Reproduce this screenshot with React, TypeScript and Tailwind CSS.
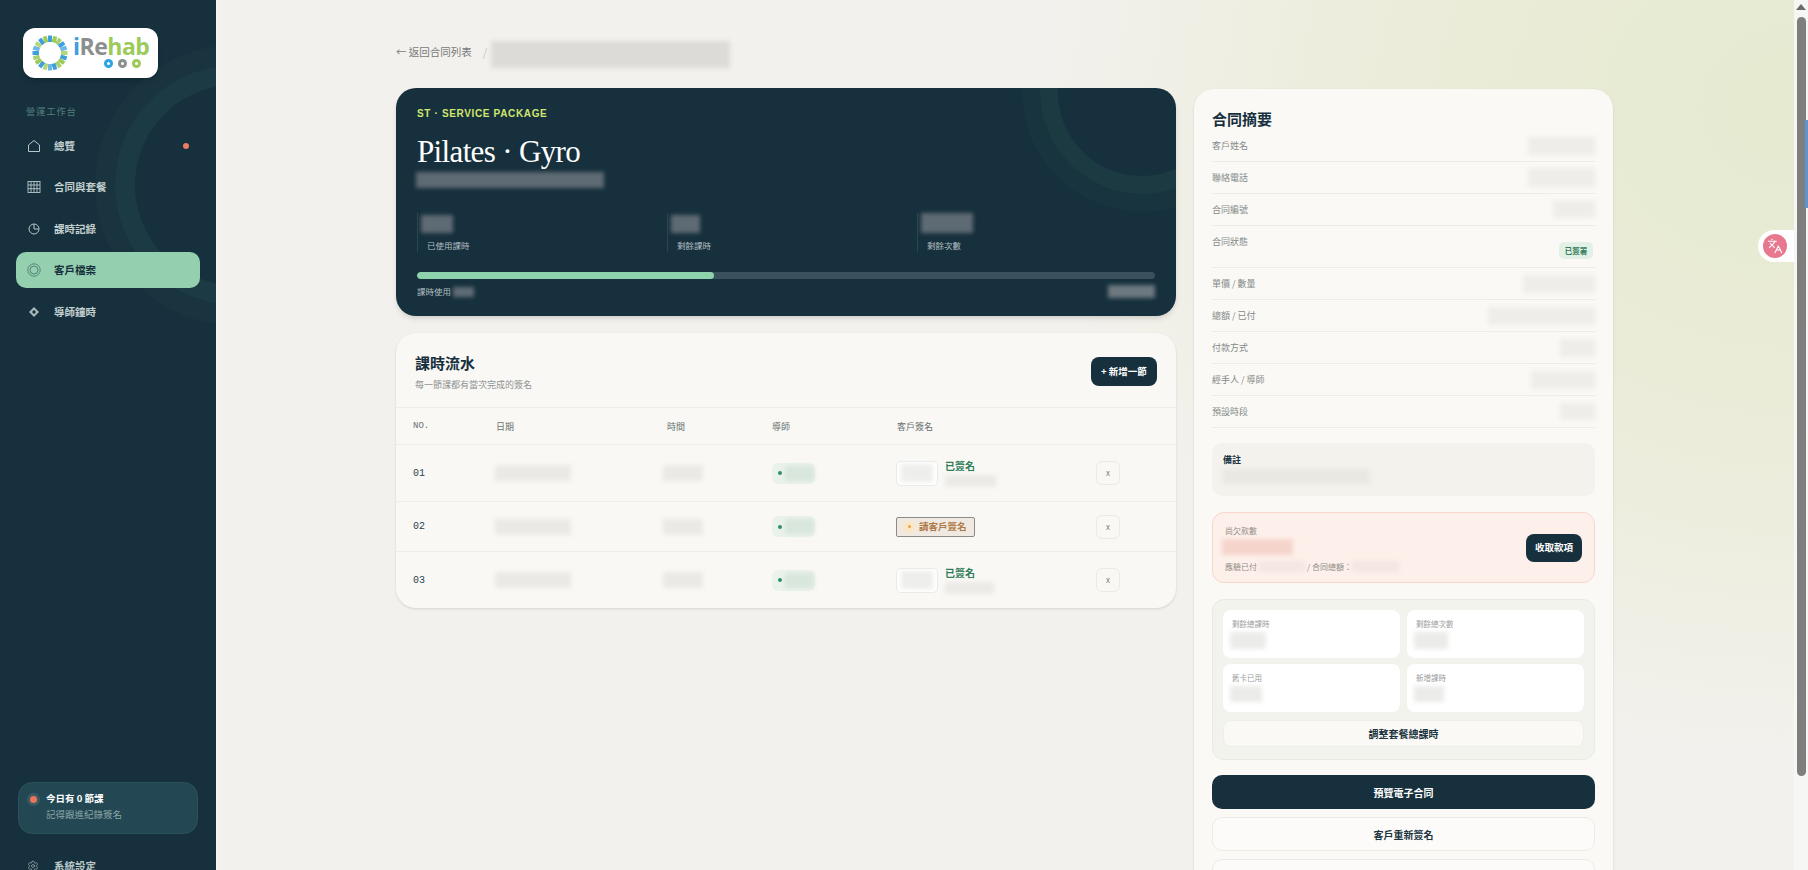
import { Languages, Settings } from 'lucide-react'

const cjk = { fontFamily: '"Noto Sans CJK TC", "Noto Sans", sans-serif' }

const summaryRows = [
  { label: '客戶姓名', blur: 'w-[67px] h-[18px]' },
  { label: '聯絡電話', blur: 'w-[67px] h-[19px]' },
  { label: '合同編號', blur: 'w-[42px] h-[17px]' },
]

const summaryRowsAfter = [
  { label: '單價 / 數量', blur: 'w-[72px] h-[18px]' },
  { label: '總額 / 已付', blur: 'w-[107px] h-[18px]' },
  { label: '付款方式', blur: 'w-[35px] h-[18px]' },
  { label: '經手人 / 導師', blur: 'w-[64px] h-[18px]' },
  { label: '預設時段', blur: 'w-[35px] h-[17px]' },
]

// blurred-out values in the screenshot
function Redact({ className }: { className: string }) {
  return <div className={`shrink-0 blur-[2px] ${className}`} />
}

function LogoRing() {
  const colors = ['#3f9fdc', '#9ccb5c', '#a9d16e', '#3f9fdc', '#6db8e6', '#b4d77a']
  return (
    <svg width="36" height="36" viewBox="0 0 36 36" className="shrink-0">
      {Array.from({ length: 20 }).map((_, i) => (
        <rect
          key={i}
          x="16"
          y="0.5"
          width="4"
          height="6.5"
          rx="0.5"
          fill={colors[i % colors.length]}
          transform={`rotate(${i * 18} 18 18)`}
        />
      ))}
    </svg>
  )
}

function LogoDot({ color }: { color: string }) {
  return (
    <span className="w-[9px] h-[9px] rounded-full flex items-center justify-center" style={{ background: color }}>
      <span className="w-[3px] h-[3px] rounded-full bg-white" />
    </span>
  )
}

function NavIcon({ name }: { name: string }) {
  if (name === 'home') {
    return (
      <svg width="14" height="14" viewBox="0 0 14 14" fill="none" stroke="#b9c7c8" strokeWidth="1">
        <path d="M1.5 6 7 1.5 12.5 6v6.5h-11z" />
      </svg>
    )
  }
  if (name === 'grid') {
    return (
      <svg width="14" height="14" viewBox="0 0 14 14" fill="none" stroke="#b9c7c8" strokeWidth="0.9">
        <rect x="1" y="1.5" width="12" height="11" />
        <path d="M4 1.5v11M7 1.5v11M10 1.5v11M1 5h12M1 8.7h12" />
      </svg>
    )
  }
  if (name === 'clock') {
    return (
      <svg width="14" height="14" viewBox="0 0 14 14" fill="none" stroke="#b9c7c8" strokeWidth="1">
        <circle cx="7" cy="7" r="5" />
        <path d="M7 2.2V7h4.6" />
      </svg>
    )
  }
  if (name === 'target') {
    return (
      <svg width="14" height="14" viewBox="0 0 14 14" fill="none" stroke="#4f7d70" strokeWidth="0.9">
        <circle cx="7" cy="7" r="6.2" />
        <circle cx="7" cy="7" r="4" />
      </svg>
    )
  }
  return (
    <svg width="14" height="14" viewBox="0 0 14 14">
      <path d="M7 2 12 7 7 12 2 7z" fill="#a9b9ba" />
      <circle cx="7" cy="7" r="1.7" fill="#16303d" />
    </svg>
  )
}

function NavItem({ icon, label, active, dot, className }: { icon: string; label: string; active?: boolean; dot?: boolean; className: string }) {
  return (
    <div
      className={`flex items-center pl-[11px] pr-[11px] h-[36px] rounded-[10px] ${active ? 'bg-[#94cfb0] text-[#17323d]' : 'text-[#c3cfcf]'} ${className}`}
    >
      <span className="w-[27px] shrink-0 flex"><NavIcon name={icon} /></span>
      <span className="text-[10.5px] font-bold">{label}</span>
      {dot && <span className="ml-auto w-[6px] h-[6px] rounded-full bg-[#e97c62]" />}
    </div>
  )
}

function Sidebar() {
  return (
    <aside className="relative w-[217px] h-full shrink-0 overflow-hidden bg-[#16303d] border-r border-[#f8f6f3]">
      <div className="absolute left-[95px] top-[45px] w-[280px] h-[280px] rounded-full border-[20px] border-[#19343f]" />
      <div className="absolute left-[115px] top-[65px] w-[240px] h-[240px] rounded-full border-[20px] border-[#1c3a44]" />

      <div className="relative flex flex-col h-full">
        <div className="ml-[23px] mt-[28px] w-[135px] h-[50px] rounded-[12px] bg-white flex items-center pl-[9px] gap-[5px] shadow-md">
          <LogoRing />
          <div className="flex flex-col leading-none">
            <div className="text-[23px] font-bold leading-[24px] tracking-[-0.5px] mt-[-5px]" style={{ fontFamily: '"Open Sans", sans-serif' }}>
              <span className="text-[#3f9fdc]">i</span>
              <span className="text-[#8c8f90]">Re</span>
              <span className="text-[#9ccb5c]">hab</span>
            </div>
            <div className="flex gap-[5px] pl-[31px] mt-[1px]">
              <LogoDot color="#2ea4e4" />
              <LogoDot color="#8c8f90" />
              <LogoDot color="#9ccb5c" />
            </div>
          </div>
        </div>

        <div className="ml-[26px] mt-[28px] text-[9px] tracking-[1.2px] text-[#557f7c] leading-[12px]">營運工作台</div>

        <div className="flex flex-col mx-[16px] mt-[10px]">
          <NavItem icon="home" label="總覽" dot className="mb-[5px]" />
          <NavItem icon="grid" label="合同與套餐" className="mb-[6px]" />
          <NavItem icon="clock" label="課時記錄" className="mb-[5px]" />
          <NavItem icon="target" label="客戶檔案" active className="mb-[6px]" />
          <NavItem icon="diamond" label="導師鐘時" />
        </div>

        <div className="mt-auto">
          <div className="mx-[18px] h-[52px] rounded-[14px] bg-[#234753] border border-[#2a505b] flex pl-[11px] pt-[9px]">
            <span className="w-[7px] h-[7px] mt-[4px] rounded-full bg-[#ea745c] ring-[3px] ring-[#3a5a63] shrink-0" />
            <div className="ml-[9px]">
              <div className="text-[9.5px] font-bold text-white leading-[13px]">今日有 0 節課</div>
              <div className="text-[9.5px] text-[#8ba6a8] leading-[13px] mt-[3px]">記得跟進紀錄簽名</div>
            </div>
          </div>
          <div className="flex items-center h-[12px] mt-[26px] ml-[27px] mb-[-2px] text-[#b9c7c8]">
            <Settings size={12} strokeWidth={1.2} className="shrink-0" />
            <span className="ml-[15px] text-[10.5px] font-bold">系統設定</span>
          </div>
        </div>
      </div>
    </aside>
  )
}

function HeroStat({ label, blur }: { label: string; blur: string }) {
  return (
    <div className="border-l border-[#2a4652] h-[39px] pl-[3px] pb-[1px] flex flex-col justify-end">
      <Redact className={`bg-[#5f6b74] ${blur}`} />
      <div className="ml-[6px] mt-[7px] text-[8.5px] leading-[11px] text-[#b3bfc2]">{label}</div>
    </div>
  )
}

function Hero() {
  return (
    <section className="relative h-[228px] rounded-[20px] bg-[#16303d] overflow-hidden px-[21px] pt-[20px] shadow-md">
      <div className="absolute left-[626px] top-[-116px] w-[240px] h-[240px] rounded-full border-[18px] border-[#18343f]" />
      <div className="absolute left-[644px] top-[-98px] w-[204px] h-[204px] rounded-full border-[18px] border-[#1b3a42]" />

      <div className="relative">
        <div className="text-[10px] font-bold leading-[12px] tracking-[0.65px] text-[#d2e66f]" style={{ fontFamily: '"Liberation Sans", sans-serif' }}>
          ST · SERVICE PACKAGE
        </div>
        <div className="mt-[14px] text-[31px] leading-[36px] tracking-[-0.65px] text-white" style={{ fontFamily: '"Liberation Serif", serif' }}>
          Pilates · Gyro
        </div>
        <Redact className="mt-[2px] -ml-[1px] w-[188px] h-[16px] bg-[#5f6b74]" />

        <div className="mt-[25px] grid grid-cols-[250px_250px_1fr]">
          <HeroStat label="已使用課時" blur="w-[32px] h-[18px]" />
          <HeroStat label="剩餘課時" blur="w-[29px] h-[18px]" />
          <HeroStat label="剩餘次數" blur="w-[52px] h-[20px]" />
        </div>

        <div className="mt-[20px] h-[7px] rounded-full bg-[#3a505c] overflow-hidden">
          <div className="h-full rounded-full bg-[#8fd3ae]" style={{ width: '40.2%' }} />
        </div>

        <div className="mt-[6px] flex items-center justify-between">
          <div className="flex items-center text-[8.5px] text-[#b3bfc2]">
            <span>課時使用</span>
            <Redact className="ml-[2px] w-[21px] h-[10px] bg-[#616c75]" />
          </div>
          <Redact className="w-[47px] h-[13px] bg-[#6d7880]" />
        </div>
      </div>
    </section>
  )
}

function SignedCell({ blurWidth }: { blurWidth: string }) {
  return (
    <div className="flex items-center -ml-[1px]">
      <div className="w-[42px] h-[25px] rounded-[5px] bg-white border border-[#e8ecE8] flex items-center justify-center">
        <Redact className="w-[32px] h-[18px] bg-[#eeeeec]" />
      </div>
      <div className="ml-[7px]">
        <div className="text-[10px] font-semibold leading-[12px] text-[#2f7d5a]">已簽名</div>
        <Redact className={`mt-[3px] h-[12px] bg-[#ebeae7] ${blurWidth}`} />
      </div>
    </div>
  )
}

function SessionRow({ no, height, pending, signBlur, last }: { no: string; height: string; pending?: boolean; signBlur?: string; last?: boolean }) {
  return (
    <div className={`grid grid-cols-[83px_171px_105px_125px_199px_24px] items-center pl-[17px] ${height} ${last ? '' : 'border-b border-[#efede9]'}`}>
      <div className="text-[10px] text-[#2a4450]" style={{ fontFamily: '"Liberation Mono", monospace' }}>{no}</div>
      <Redact className="w-[76px] h-[16px] -ml-[1px] bg-[#ebe9e6]" />
      <Redact className="w-[40px] h-[16px] -ml-[4px] bg-[#ebe9e6]" />
      <div className="w-[43px] h-[21px] rounded-[6px] bg-[#eaf2ec] flex items-center pl-[6px]">
        <span className="w-[4px] h-[4px] rounded-full bg-[#2f8f63] shrink-0" />
        <Redact className="ml-[3px] w-[29px] h-[15px] bg-[#d8e6db]" />
      </div>
      {pending ? (
        <div className="-ml-[1px] w-[79px] h-[20px] rounded-[2px] bg-[#efe9e1] border border-[#8a8a88] flex items-center pl-[6px]">
          <span className="w-[12px] h-[12px] rounded-full bg-[#fbe7c8] flex items-center justify-center shrink-0">
            <span className="w-[3px] h-[3px] rounded-full bg-[#eda23c]" />
          </span>
          <span className="ml-[4px] text-[9.5px] font-semibold text-[#b07a47]">請客戶簽名</span>
        </div>
      ) : (
        <SignedCell blurWidth={signBlur || 'w-[50px]'} />
      )}
      <div className="w-[24px] h-[24px] rounded-[6px] border border-[#eceae6] flex items-center justify-center text-[8px] text-[#77807f]">x</div>
    </div>
  )
}

function SessionTable() {
  return (
    <section className="mt-[17px] rounded-[20px] bg-[#faf8f5] shadow-sm overflow-hidden">
      <div className="h-[75px] border-b border-[#efede9] flex justify-between px-[19px]">
        <div className="pt-[20px]">
          <h3 className="text-[15px] font-bold leading-[20px] text-[#16303d]">課時流水</h3>
          <p className="mt-[6px] text-[9px] leading-[12px] text-[#8f9392]">每一節課都有當次完成的簽名</p>
        </div>
        <button className="mt-[24px] w-[66px] h-[29px] rounded-[8px] bg-[#16303d] text-white text-[9.5px] font-bold">+ 新增一節</button>
      </div>

      <div className="grid grid-cols-[83px_171px_105px_125px_199px_24px] items-center h-[37px] pl-[17px] pt-[2px] border-b border-[#efede9] text-[9px] text-[#66716f]">
        <div style={{ fontFamily: '"Liberation Mono", monospace' }}>NO.</div>
        <div>日期</div>
        <div>時間</div>
        <div>導師</div>
        <div>客戶簽名</div>
        <div />
      </div>

      <SessionRow no="01" height="h-[57px]" signBlur="w-[51px]" />
      <SessionRow no="02" height="h-[50px]" pending />
      <SessionRow no="03" height="h-[56px]" signBlur="w-[49px]" last />
    </section>
  )
}

function SummaryRow({ label, blur }: { label: string; blur: string }) {
  return (
    <div className="h-[32px] flex items-center justify-between border-b border-[#eeece8] text-[9px] text-[#858a89]">
      <span>{label}</span>
      <Redact className={`bg-[#eeedea] ${blur}`} />
    </div>
  )
}

function MiniStat({ label, blur }: { label: string; blur: string }) {
  return (
    <div className="h-[48px] rounded-[8px] bg-white pl-[9px] pt-[8px]">
      <div className="text-[7.5px] leading-[11px] text-[#9a9d9c]">{label}</div>
      <Redact className={`mt-[3px] -ml-[2px] bg-[#ebebe9] ${blur}`} />
    </div>
  )
}

function SummaryCard() {
  return (
    <section className="mt-[48px] rounded-[20px] bg-[#faf9f6] shadow-sm px-[18px] pt-[20px] pb-[30px]">
      <h3 className="text-[15px] font-bold leading-[20px] mb-[1px] text-[#16303d]">合同摘要</h3>

      {summaryRows.map((r) => <SummaryRow key={r.label} label={r.label} blur={r.blur} />)}

      <div className="h-[42px] flex justify-between border-b border-[#eeece8] text-[9px] text-[#858a89]">
        <span className="mt-[9px] leading-[14px]">合同狀態</span>
        <span className="mt-[16px] mr-[2px] w-[34px] h-[17px] rounded-[5px] bg-[#e3f0e6] text-[7.5px] font-semibold text-[#2f7d5a] flex items-center justify-center">已簽署</span>
      </div>

      {summaryRowsAfter.map((r) => <SummaryRow key={r.label} label={r.label} blur={r.blur} />)}

      <div className="mt-[15px] h-[53px] rounded-[10px] bg-[#f3f2ed] px-[11px] pt-[11px]">
        <div className="text-[9px] font-bold leading-[12px] text-[#16303d]">備註</div>
        <Redact className="mt-[3px] w-[147px] h-[15px] bg-[#e9e8e3]" />
      </div>

      <div className="mt-[16px] h-[71px] rounded-[12px] bg-[#fdf0ea] border border-[#f8d6cc] flex justify-between pl-[12px] pr-[12px]">
        <div className="pt-[12px]">
          <div className="text-[8px] leading-[11px] text-[#918c88]">尚欠款數</div>
          <Redact className="mt-[3px] -ml-[3px] w-[71px] h-[16px] bg-[#f5d5cb]" />
          <div className="mt-[6px] flex items-center text-[8px] leading-[11px] text-[#918c88]">
            <span>應驗已付</span>
            <Redact className="mx-[2px] w-[46px] h-[11px] bg-[#f4e6e1]" />
            <span>/ 合同總額：</span>
            <Redact className="w-[47px] h-[11px] bg-[#f4e6e1]" />
          </div>
        </div>
        <button className="self-center w-[56px] h-[28px] rounded-[8px] bg-[#16303d] text-white text-[9.5px] font-bold">收取款項</button>
      </div>

      <div className="mt-[16px] h-[161px] rounded-[12px] bg-[#f3f3ed] border border-[#e9eae3] px-[10px] pt-[10px]">
        <div className="grid grid-cols-2 gap-x-[7px] gap-y-[6px]">
          <MiniStat label="剩餘總課時" blur="w-[36px] h-[17px]" />
          <MiniStat label="剩餘總次數" blur="w-[34px] h-[17px]" />
          <MiniStat label="舊卡已用" blur="w-[32px] h-[16px]" />
          <MiniStat label="新增課時" blur="w-[30px] h-[16px]" />
        </div>
        <button className="mt-[8px] w-full h-[27px] rounded-[8px] bg-[#faf9f6] border border-[#eeede8] text-[10px] font-bold text-[#1d3540]">調整套餐總課時</button>
      </div>

      <button className="mt-[15px] w-full h-[34px] rounded-[10px] bg-[#16303d] text-white text-[10px] font-bold">預覽電子合同</button>
      <button className="mt-[8px] w-full h-[34px] rounded-[10px] bg-[#fcfbf9] border border-[#ecebe6] text-[10px] font-bold text-[#1d3540]">客戶重新簽名</button>
      <div className="mt-[8px] w-full h-[34px] rounded-[10px] bg-[#fcfbf9] border border-[#ecebe6]" />
    </section>
  )
}

function FakeScrollbar() {
  return (
    <div className="relative w-[14px] h-full shrink-0 bg-[#f6f6f5] overflow-hidden">
      <div className="absolute right-0 top-[120px] w-[3px] h-[88px] bg-[#5f93cc]" />
      <div className="mx-auto mt-[4px] w-0 h-0 border-x-[5px] border-x-transparent border-b-[6px] border-b-[#6b6b6b]" />
      <div className="ml-[3px] mt-[7px] w-[9px] h-[759px] rounded-full bg-[#7e7e7e]" />
    </div>
  )
}

export default function App() {
  return (
    <div className="relative flex h-screen overflow-hidden bg-[#f3f1ed]" style={cjk}>
      <Sidebar />

      <main className="relative flex-1 min-w-0 h-full overflow-hidden bg-[radial-gradient(ellipse_760px_660px_at_100%_12%,#e6ead0_0%,#ebecd9_50%,#f3f1ed_100%)] pl-[179px]">
        <div className="grid grid-cols-[780px_419px] gap-x-[18px] pt-[41px] items-start">
          <div>
            <div className="flex items-start h-[27px] mb-[20px] pt-[3px] text-[#77797a]">
              <span className="text-[10.5px]">← 返回合同列表</span>
              <span className="ml-[11px] mr-[4px] text-[11px] text-[#c8c6c2]">/</span>
              <Redact className="-mt-[3px] w-[239px] h-[27px] bg-[#dcdbd8]" />
            </div>
            <Hero />
            <SessionTable />
          </div>
          <SummaryCard />
        </div>
      </main>

      <FakeScrollbar />

      {/* page translate widget */}
      <div className="absolute left-[1758px] top-[230px] w-[36px] h-[32px] rounded-l-full bg-white flex items-center pl-[5px]">
        <div className="w-[24px] h-[24px] rounded-full bg-[#e8788e] text-white flex items-center justify-center">
          <Languages size={16} strokeWidth={1.6} />
        </div>
      </div>
    </div>
  )
}
